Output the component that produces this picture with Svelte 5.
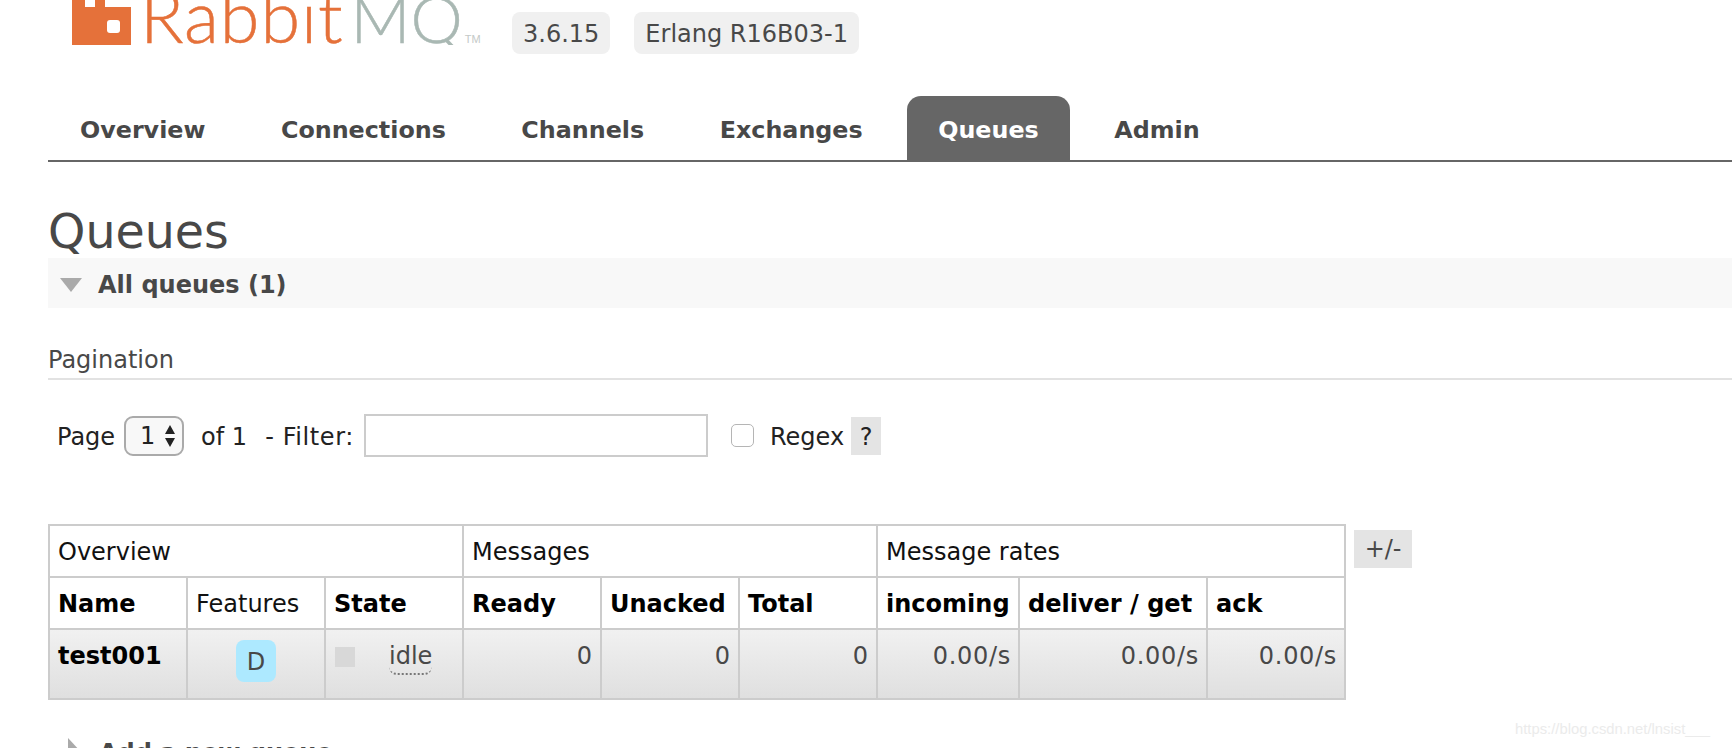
<script>
    const tabs = ['Overview', 'Connections', 'Channels', 'Exchanges', 'Queues', 'Admin']
    const active = 'Queues'
    const rates = ['0.00/s', '0.00/s', '0.00/s']
    const counts = [0, 0, 0]
</script>

<div class="page">
    <header>
        <div class="logo">
            <svg class="mark" width="59" height="45" viewBox="0 0 59 45" aria-hidden="true">
                <path fill="#e5713a" d="M0 0H13V7H23V0H33V7H59V45H0Z" />
                <rect x="35" y="20" width="13" height="13" rx="3" fill="#fff" />
            </svg>
            <span class="word">Rabbit<span class="mq">MQ</span></span>
            <span class="tm">TM</span>
        </div>
        <span class="version">3.6.15</span>
        <span class="version">Erlang R16B03-1</span>
    </header>

    <nav>
        {#each tabs as tab}
            <a href="#top" class:selected={tab === active}>{tab}</a>
        {/each}
    </nav>

    <h1>Queues</h1>

    <div class="section-title">
        <span class="arrow-down"></span>
        <strong>All queues (1)</strong>
    </div>

    <h3>Pagination</h3>

    <div class="filter">
        <span class="page-label">Page</span>
        <span class="select">
            1
            <svg width="12" height="24" viewBox="0 0 12 24" aria-hidden="true">
                <path fill="#222" d="M6 1L11 10H1ZM6 23L1 14H11Z" />
            </svg>
        </span>
        <span class="of">of 1</span>
        <span class="filter-label">- Filter:</span>
        <input type="text" />
        <input type="checkbox" />
        <span class="regex">Regex</span>
        <span class="help">?</span>
    </div>

    <div class="table-row">
        <table>
            <colgroup>
                <col class="c138" /><col class="c138" /><col class="c138" />
                <col class="c138" /><col class="c138" /><col class="c138" />
                <col class="c142" /><col class="c188" /><col class="c138" />
            </colgroup>
            <thead>
                <tr class="group">
                    <th colspan="3">Overview</th>
                    <th colspan="3">Messages</th>
                    <th colspan="3">Message rates</th>
                </tr>
                <tr class="names">
                    <th class="b">Name</th>
                    <th>Features</th>
                    <th class="b">State</th>
                    <th class="b">Ready</th>
                    <th class="b">Unacked</th>
                    <th class="b">Total</th>
                    <th class="b">incoming</th>
                    <th class="b">deliver / get</th>
                    <th class="b">ack</th>
                </tr>
            </thead>
            <tbody>
                <tr>
                    <td class="name">test001</td>
                    <td class="features"><span class="badge">D</span></td>
                    <td class="state">
                        <span class="status"><span class="square"></span><span class="idle">idle</span></span>
                    </td>
                    {#each counts as n}
                        <td class="num">{n}</td>
                    {/each}
                    {#each rates as r}
                        <td class="num rate">{r}</td>
                    {/each}
                </tr>
            </tbody>
        </table>
        <span class="plus-minus">+/-</span>
    </div>

    <div class="section-title closed">
        <span class="arrow-right"></span>
        <strong>Add a new queue</strong>
    </div>

    <span class="watermark">https://blog.csdn.net/lnsist___</span>
</div>

<style>
    :global(body) {
        margin: 0;
        background: #fff;
    }
    .page {
        position: relative;
        height: 100vh;
        overflow: hidden;
        font-family: "DejaVu Sans", Verdana, sans-serif;
        font-size: 24px;
        color: #484848;
    }

    header {
        display: flex;
        align-items: flex-start;
        height: 96px;
        padding-left: 72px;
    }
    .logo {
        display: flex;
        align-items: flex-end;
        height: 45px;
        width: 440px;
        overflow: hidden;
    }
    .mark {
        flex: none;
    }
    .word {
        margin-left: 9px;
        font-family: Lato, "Liberation Sans", sans-serif;
        font-weight: 300;
        font-size: 72px;
        line-height: 54px;
        letter-spacing: 0.9px;
        -webkit-text-stroke: 0.5px currentColor;
        color: #e5713a;
        white-space: nowrap;
    }
    .mq {
        margin-left: 7px;
        font-size: 66px;
        letter-spacing: 0;
        color: #a9b8b3;
    }
    .tm {
        margin-left: 2px;
        font-family: "Liberation Sans", sans-serif;
        font-size: 11px;
        line-height: 12px;
        color: #c4c9c7;
    }
    .version {
        margin-top: 12px;
        margin-right: 24px;
        padding: 0 11px;
        height: 42px;
        line-height: 45px;
        border-radius: 8px;
        background: #f0f0f0;
    }

    nav {
        display: flex;
        gap: 13.5px;
        margin-left: 48px;
        padding-left: 1px;
        border-bottom: 2px solid #666;
    }
    nav a {
        padding: 0 31px;
        height: 64px;
        font-size: 23.8px;
        line-height: 68px;
        font-weight: bold;
        color: #484848;
        text-decoration: none;
        border-radius: 14px 14px 0 0;
    }
    nav a.selected {
        background: #666;
        color: #fff;
    }

    h1 {
        margin: 40px 0 0 48px;
        height: 56px;
        font-size: 47.5px;
        line-height: 60px;
        font-weight: normal;
    }

    .section-title {
        display: flex;
        align-items: center;
        box-sizing: border-box;
        height: 50px;
        padding-top: 3px;
        margin-left: 48px;
        background: #f8f8f8;
    }
    .section-title strong {
        margin-left: 16px;
        white-space: nowrap;
    }
    .arrow-down {
        margin-left: 12px;
        border-left: 11px solid transparent;
        border-right: 11px solid transparent;
        border-top: 14px solid #aaa;
    }

    h3 {
        margin: 30px 0 0 48px;
        height: 40px;
        line-height: 44px;
        font-size: 24px;
        font-weight: normal;
        border-bottom: 2px solid #e2e2e2;
    }

    .filter {
        display: flex;
        align-items: center;
        height: 43px;
        margin: 34px 0 0 57px;
        color: #222;
    }
    .filter span {
        padding-top: 2px;
    }
    .filter .select {
        display: flex;
        align-items: center;
        justify-content: space-between;
        box-sizing: border-box;
        width: 60px;
        height: 40px;
        margin-left: 9px;
        padding: 0 6px 0 14px;
        border: 2px solid #aaa;
        border-radius: 9px;
        background: #f8f8f8;
    }
    .of {
        margin-left: 17px;
    }
    .filter-label {
        margin-left: 18px;
        letter-spacing: 0.6px;
    }
    .filter input[type="text"] {
        box-sizing: border-box;
        width: 344px;
        height: 43px;
        margin: 0 0 0 10px;
        border: 2px solid #ccc;
        background: #fff;
        outline: none;
    }
    .filter input[type="checkbox"] {
        appearance: none;
        box-sizing: border-box;
        width: 23px;
        height: 23px;
        margin: 0 0 0 23px;
        border: 1px solid #b5b5b5;
        border-radius: 5px;
        background: #fff;
    }
    .regex {
        margin-left: 16px;
    }
    .filter .help {
        box-sizing: border-box;
        width: 30px;
        height: 38px;
        margin-left: 7px;
        padding-top: 0;
        line-height: 40px;
        text-align: center;
        background: #e4e4e4;
    }

    .table-row {
        display: flex;
        align-items: flex-start;
        margin: 67px 0 0 48px;
    }
    table {
        width: 1296px;
        table-layout: fixed;
        border-collapse: collapse;
        border: 2px solid #ccc;
        color: #111;
    }
    .c138 { width: 138px; }
    .c142 { width: 142px; }
    .c188 { width: 188px; }
    th, td {
        border: 2px solid #ccc;
        padding: 2px 8px 0;
        text-align: left;
        white-space: nowrap;
        font-weight: normal;
    }
    th.b, td.name {
        font-weight: bold;
        color: #000;
    }
    tr.group th, tr.names th {
        height: 48px;
    }
    tbody tr {
        background: linear-gradient(#f1f1f1, #dfdfdf);
    }
    td {
        height: 70px;
        vertical-align: top;
        padding-top: 12px;
        box-sizing: border-box;
        color: #484848;
    }
    td.features {
        padding-top: 10px;
        text-align: center;
    }
    .badge {
        display: inline-block;
        width: 40px;
        height: 42px;
        line-height: 44px;
        border-radius: 8px;
        background: #ade9ff;
    }
    .status {
        display: flex;
        align-items: flex-start;
    }
    .square {
        width: 20px;
        height: 20px;
        margin-top: 5px;
        margin-left: 1px;
        background: #d8d8d8;
    }
    .idle {
        margin-left: 34px;
        height: 31px;
        border-bottom: 2px dotted #777;
        border-radius: 0 0 8px 8px;
    }
    td.num {
        text-align: right;
    }
    td.rate {
        padding-right: 7px;
        letter-spacing: 0.7px;
    }
    .plus-minus {
        width: 58px;
        height: 38px;
        margin: 6px 0 0 8px;
        line-height: 38px;
        text-align: center;
        background: #e4e4e4;
    }

    .section-title.closed {
        margin-top: 26px;
        background: none;
    }
    .arrow-right {
        margin-left: 20px;
        border-top: 15px solid transparent;
        border-bottom: 15px solid transparent;
        border-left: 14px solid #aaa;
    }
    .closed strong {
        margin-left: 17px;
    }

    .watermark {
        position: absolute;
        left: 1515px;
        top: 721px;
        font-family: "Liberation Sans", sans-serif;
        font-size: 14.8px;
        color: #ebebeb;
    }
</style>
